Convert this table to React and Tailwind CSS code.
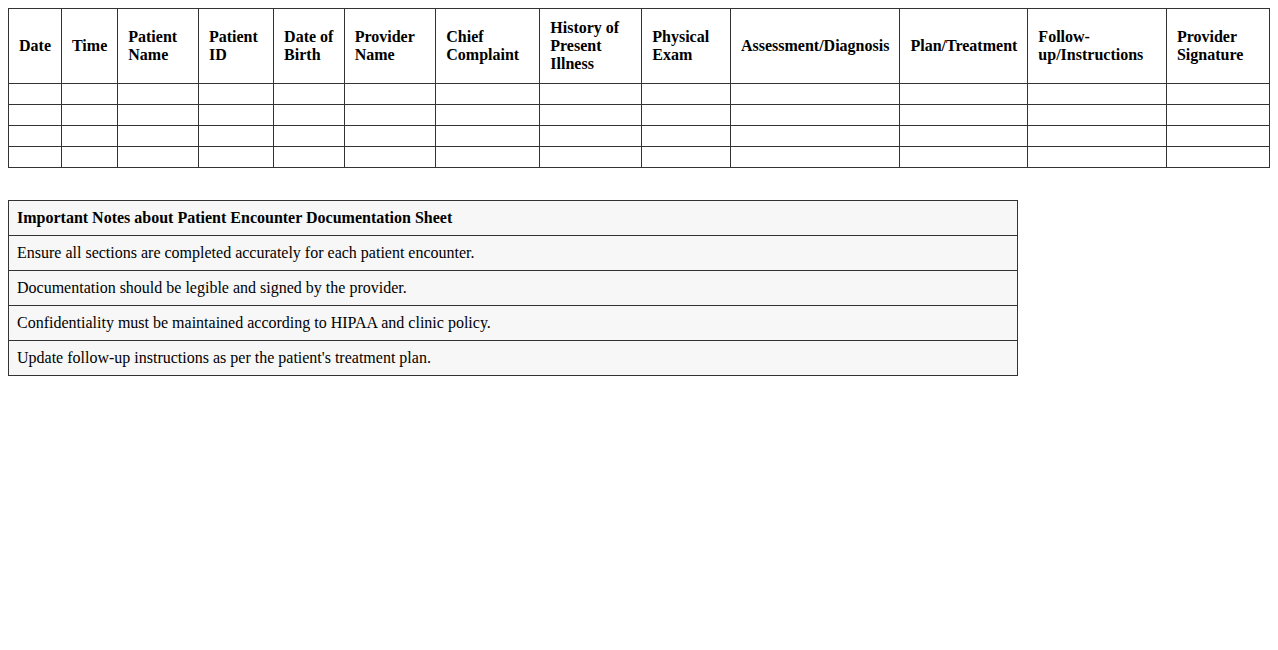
import React from "react";

const headers = [
  "Date",
  "Time",
  "Patient Name",
  "Patient ID",
  "Date of Birth",
  "Provider Name",
  "Chief Complaint",
  "History of Present Illness",
  "Physical Exam",
  "Assessment/Diagnosis",
  "Plan/Treatment",
  "Follow-up/Instructions",
  "Provider Signature",
];

const notes = [
  "Ensure all sections are completed accurately for each patient encounter.",
  "Documentation should be legible and signed by the provider.",
  "Confidentiality must be maintained according to HIPAA and clinic policy.",
  "Update follow-up instructions as per the patient's treatment plan.",
];

const App = () => {
  return (
    <div className="bg-white p-2 text-black text-base leading-[normal] font-['Liberation_Serif','Times_New_Roman',serif] min-h-[650px]">
      {/* encounter grid */}
      <table className="w-full border-collapse">
        <thead>
          <tr>
            {headers.map((h) => (
              <th
                key={h}
                className="border border-[#333] p-[10px] text-left align-middle font-bold"
              >
                {h}
              </th>
            ))}
          </tr>
        </thead>
        <tbody>
          {[0, 1, 2, 3].map((r) => (
            <tr key={r}>
              {headers.map((h) => (
                <td key={h} className="border border-[#333] p-[10px]"></td>
              ))}
            </tr>
          ))}
        </tbody>
      </table>

      {/* notes */}
      <table className="w-4/5 border-collapse mt-8">
        <tbody>
          <tr>
            <td className="border border-[#333] bg-[#f7f7f7] p-2 font-bold">
              Important Notes about Patient Encounter Documentation Sheet
            </td>
          </tr>
          {notes.map((n) => (
            <tr key={n}>
              <td className="border border-[#333] bg-[#f7f7f7] p-2">{n}</td>
            </tr>
          ))}
        </tbody>
      </table>
    </div>
  );
};

export default App;
